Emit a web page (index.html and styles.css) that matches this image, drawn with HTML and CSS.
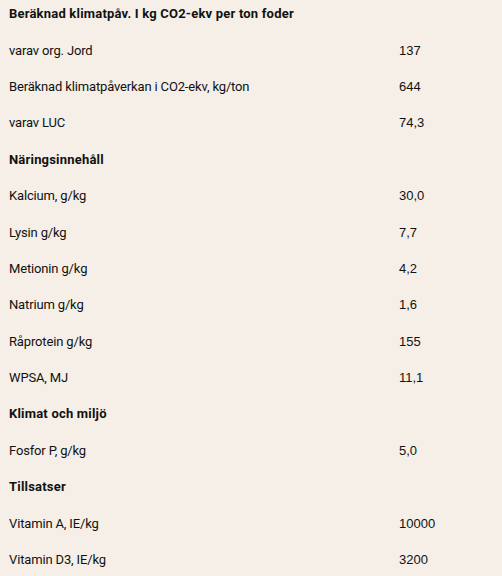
FILE: index.html
```html
<!DOCTYPE html>
<html lang="sv">
<head>
<meta charset="utf-8">
<link rel="stylesheet" href="styles.css">
</head>
<body>
<table class="specs">
  <tbody>
    <tr class="group"><th colspan="2">Beräknad klimatpåv. I kg CO2-ekv per ton foder</th></tr>
    <tr><td class="label">varav org. Jord</td><td class="value">137</td></tr>
    <tr><td class="label">Beräknad klimatpåverkan i CO2-ekv, kg/ton</td><td class="value">644</td></tr>
    <tr><td class="label">varav LUC</td><td class="value">74,3</td></tr>
    <tr class="group"><th colspan="2">Näringsinnehåll</th></tr>
    <tr><td class="label">Kalcium, g/kg</td><td class="value">30,0</td></tr>
    <tr><td class="label">Lysin g/kg</td><td class="value">7,7</td></tr>
    <tr><td class="label">Metionin g/kg</td><td class="value">4,2</td></tr>
    <tr><td class="label">Natrium g/kg</td><td class="value">1,6</td></tr>
    <tr><td class="label">Råprotein g/kg</td><td class="value">155</td></tr>
    <tr><td class="label">WPSA, MJ</td><td class="value">11,1</td></tr>
    <tr class="group"><th colspan="2">Klimat och miljö</th></tr>
    <tr><td class="label">Fosfor P, g/kg</td><td class="value">5,0</td></tr>
    <tr class="group"><th colspan="2">Tillsatser</th></tr>
    <tr><td class="label">Vitamin A, IE/kg</td><td class="value">10000</td></tr>
    <tr><td class="label">Vitamin D3, IE/kg</td><td class="value">3200</td></tr>
  </tbody>
</table>
</body>
</html>
```
FILE: styles.css
```css
html, body {
  margin: 0;
  padding: 0;
  background: #f5efe7;
}
body {
  color: #111;
  font-family: Roboto, "Noto Sans", sans-serif;
  font-size: 13px;
}
.specs {
  border-collapse: collapse;
  width: 100%;
  margin-top: -4px;
}
.specs th, .specs td {
  height: 36.4px;
  padding: 0 0 0 9px;
  box-sizing: border-box;
  vertical-align: middle;
  text-align: left;
  line-height: 18px;
}
.specs th {
  font-weight: 700;
  letter-spacing: 0.2px;
}
.label {
  width: 390px;
  letter-spacing: -0.15px;
}
.value {
  font-family: "Liberation Sans", Arial, sans-serif;
}
```
